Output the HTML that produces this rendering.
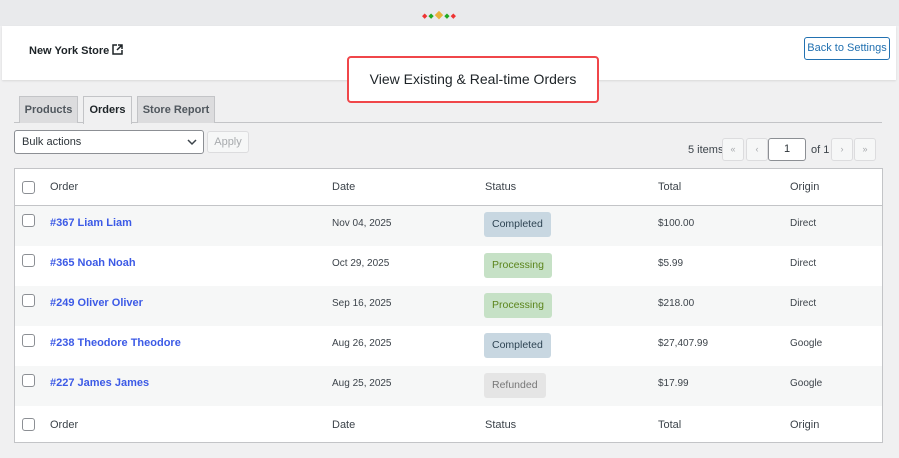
<!DOCTYPE html><html><head><style>
*{box-sizing:border-box}
body{margin:0;width:899px;height:458px;background:#f0f0f1;font-family:"Liberation Sans",sans-serif;position:relative;overflow:hidden;font-size:11px;color:#3c434a}
.a{position:absolute}
.top{left:0;top:0;width:899px;height:26px;background:#e9eaec}
.hdr{left:2px;top:26px;width:894px;height:54px;background:#fff;box-shadow:0 1px 2px rgba(0,0,0,.1)}
.tab{top:96px;height:27px;border:1px solid #c3c4c7;border-bottom:none;background:#dcdcde;font-weight:bold;color:#50575e;line-height:26px;text-align:center;font-size:11px}
.cb{width:13px;height:13px;border:1px solid #8c8f94;border-radius:3px;background:#fff}
.row{left:15px;width:867px;height:40px}
.st{height:25px;line-height:25px;border-radius:3px;padding:0 8px;font-size:10.5px}
.pg{top:138px;width:22px;height:23px;border:1px solid #dcdcde;border-radius:3px;background:#f6f7f7;color:#a7aaad;text-align:center;line-height:21px;font-size:9px}
.ln{color:#3c5ae6;font-weight:bold}
.d{font-size:10px}
</style></head><body>
<div class="a top"></div>
<div class="a" style="left:422px;top:8px;color:#e33;font-size:7px;letter-spacing:1px">◆<span style="color:#2a2">◆</span><span style="color:#e8b13a;font-size:11px">◆</span><span style="color:#2a2">◆</span>◆</div>
<div class="a hdr"></div>
<div class="a" style="left:29px;top:44px;font-weight:bold;color:#1d2327;font-size:11px">New York Store <svg width="11" height="11" viewBox="0 0 11 11" style="vertical-align:-1px"><path d="M5 1H1v9h9V6" fill="none" stroke="#1d2327" stroke-width="1.5"/><path d="M6 1h4v4M10 1L5 6" fill="none" stroke="#1d2327" stroke-width="1.5"/></svg></div>
<div class="a" style="left:804px;top:37px;width:86px;height:23px;border:1px solid #2271b1;border-radius:3px;color:#2271b1;text-align:center;line-height:21px;background:#fff">Back to Settings</div>
<div class="a" style="left:347px;top:56px;width:252px;height:47px;border:2px solid #f0464a;border-radius:4px;background:#fff;font-size:14px;color:#1d2327;line-height:43px;text-align:center">View Existing &amp; Real-time Orders</div>
<div class="a" style="left:14px;top:122px;width:868px;border-top:1px solid #c3c4c7"></div>
<div class="a tab" style="left:19px;width:59px">Products</div>
<div class="a tab" style="left:83px;width:49px;background:#f0f0f1;color:#1d2327;height:28px">Orders</div>
<div class="a tab" style="left:137px;width:78px">Store Report</div>
<div class="a" style="left:14px;top:130px;width:190px;height:24px;border:1px solid #8c8f94;border-radius:3px;background:#fff;line-height:22px;padding-left:7px;color:#2c3338">Bulk actions<svg class="a" style="right:6px;top:8px" width="10" height="7"><path d="M1 1l4 4 4-4" fill="none" stroke="#3c434a" stroke-width="1.5"/></svg></div>
<div class="a" style="left:207px;top:131px;width:42px;height:22px;border:1px solid #dcdcde;border-radius:3px;background:#f6f7f7;color:#a7aaad;text-align:center;line-height:20px">Apply</div>
<div class="a" style="left:688px;top:144px">5 items</div>
<div class="a pg" style="left:722px">«</div><div class="a pg" style="left:746px">‹</div>
<div class="a" style="left:768px;top:138px;width:38px;height:23px;border:1px solid #8c8f94;border-radius:3px;background:#fff;text-align:center;line-height:21px;color:#2c3338">1</div>
<div class="a" style="left:811px;top:144px">of 1</div>
<div class="a pg" style="left:831px">›</div><div class="a pg" style="left:854px">»</div>
<div class="a" style="left:14px;top:168px;width:869px;height:275px;border:1px solid #c3c4c7;background:#fff"></div>
<div class="a" style="left:15px;top:205px;width:867px;border-top:1px solid #c3c4c7"></div>
<div class="a" style="left:15px;top:405px;width:867px;border-top:1px solid #c3c4c7"></div>
<div class="a row" style="top:206px;background:#f6f7f7"></div>
<div class="a row" style="top:286px;background:#f6f7f7"></div>
<div class="a row" style="top:366px;background:#f6f7f7"></div>
<div class="a cb" style="left:22px;top:181px"></div><div class="a" style="left:50px;top:181px">Order</div><div class="a" style="left:332px;top:181px">Date</div><div class="a" style="left:485px;top:181px">Status</div><div class="a" style="left:658px;top:181px">Total</div><div class="a" style="left:790px;top:181px">Origin</div>
<div class="a cb" style="left:22px;top:418px"></div><div class="a" style="left:50px;top:419px">Order</div><div class="a" style="left:332px;top:419px">Date</div><div class="a" style="left:485px;top:419px">Status</div><div class="a" style="left:658px;top:419px">Total</div><div class="a" style="left:790px;top:419px">Origin</div>
<div class="a cb" style="left:22px;top:214px"></div><div class="a ln" style="left:50px;top:217px">#367 Liam Liam</div><div class="a d" style="left:332px;top:218px">Nov 04, 2025</div><div class="a st" style="left:484px;top:212px;background:#c8d7e1;color:#2e4453">Completed</div><div class="a d" style="left:658px;top:218px">$100.00</div><div class="a d" style="left:790px;top:218px">Direct</div>
<div class="a cb" style="left:22px;top:254px"></div><div class="a ln" style="left:50px;top:257px">#365 Noah Noah</div><div class="a d" style="left:332px;top:258px">Oct 29, 2025</div><div class="a st" style="left:484px;top:253px;background:#c6e1c6;color:#5b841b">Processing</div><div class="a d" style="left:658px;top:258px">$5.99</div><div class="a d" style="left:790px;top:258px">Direct</div>
<div class="a cb" style="left:22px;top:294px"></div><div class="a ln" style="left:50px;top:297px">#249 Oliver Oliver</div><div class="a d" style="left:332px;top:298px">Sep 16, 2025</div><div class="a st" style="left:484px;top:293px;background:#c6e1c6;color:#5b841b">Processing</div><div class="a d" style="left:658px;top:298px">$218.00</div><div class="a d" style="left:790px;top:298px">Direct</div>
<div class="a cb" style="left:22px;top:334px"></div><div class="a ln" style="left:50px;top:337px">#238 Theodore Theodore</div><div class="a d" style="left:332px;top:338px">Aug 26, 2025</div><div class="a st" style="left:484px;top:333px;background:#c8d7e1;color:#2e4453">Completed</div><div class="a d" style="left:658px;top:338px">$27,407.99</div><div class="a d" style="left:790px;top:338px">Google</div>
<div class="a cb" style="left:22px;top:374px"></div><div class="a ln" style="left:50px;top:377px">#227 James James</div><div class="a d" style="left:332px;top:378px">Aug 25, 2025</div><div class="a st" style="left:484px;top:373px;background:#e5e5e5;color:#777">Refunded</div><div class="a d" style="left:658px;top:378px">$17.99</div><div class="a d" style="left:790px;top:378px">Google</div>
</body></html>
